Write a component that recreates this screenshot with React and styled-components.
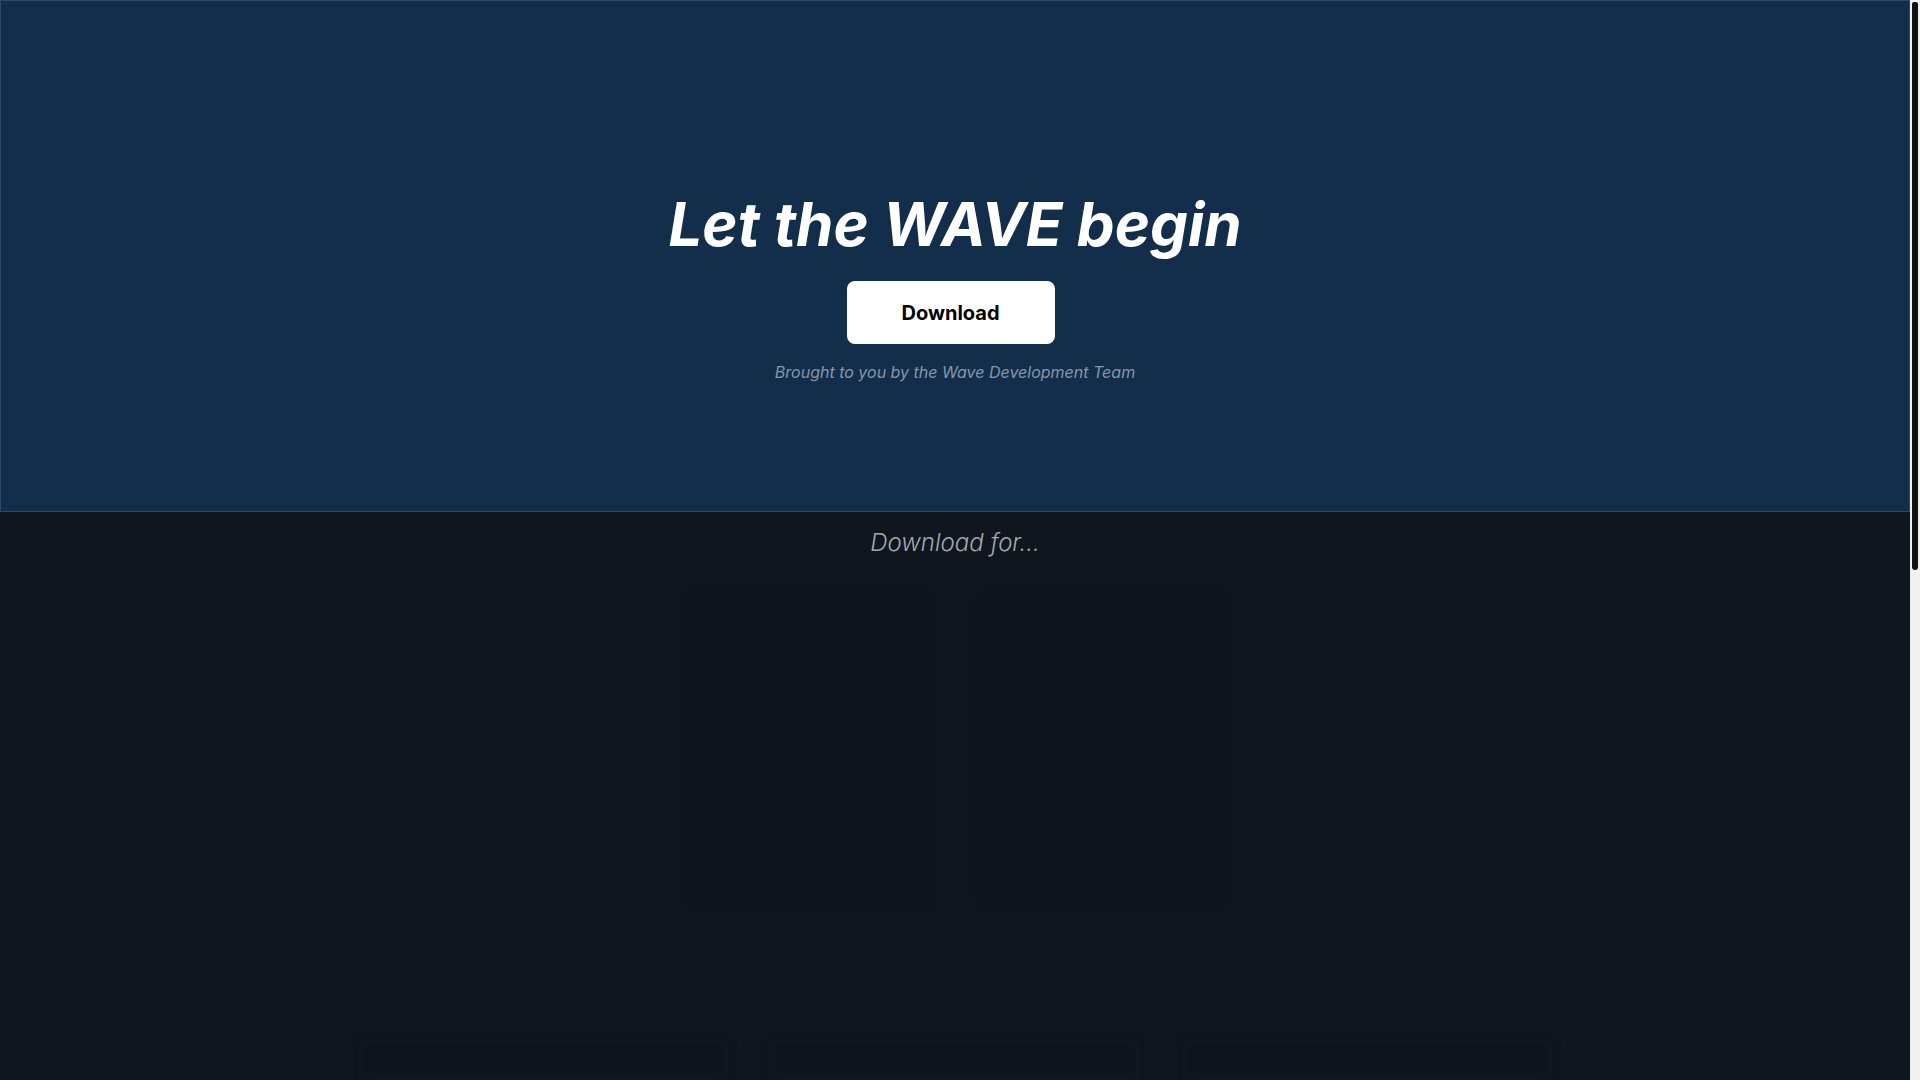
import styled, { createGlobalStyle } from 'styled-components';

const platforms = ['windows', 'linux'];
const extras = ['changelog', 'source', 'community'];

export default function App() {
    return (
        <>
            <GlobalStyle />
            <Page>
                <Hero>
                    <Title>Let the WAVE begin</Title>
                    <DownloadButton>Download</DownloadButton>
                    <Credit>Brought to you by the Wave Development Team</Credit>
                </Hero>

                <Downloads>
                    <SectionTitle>Download for...</SectionTitle>
                    <PlatformGrid>
                        {platforms.map(p => (
                            <PlatformCard key={p} />
                        ))}
                    </PlatformGrid>

                    <InfoGrid>
                        {extras.map(e => (
                            <InfoCard key={e}>
                                <InfoHeader />
                            </InfoCard>
                        ))}
                    </InfoGrid>
                </Downloads>
            </Page>
            <ScrollTrack>
                <ScrollThumb />
            </ScrollTrack>
        </>
    );
}

const GlobalStyle = createGlobalStyle`
    * {
        box-sizing: border-box;
    }

    html, body {
        margin: 0;
        padding: 0;
        background-color: #0F161E;
        font-family: Inter, "Noto Sans", sans-serif;
    }

    ::-webkit-scrollbar {
        display: none;
    }
`;

const Page = styled.div`
    width: calc(100% - 10px);
    min-height: 2046px;
    background-color: #0F161E;
`;

// scrollbar look-alike, the page is taller than the window
const ScrollTrack = styled.div`
    position: fixed;
    top: 0;
    right: 0;
    width: 10px;
    height: 100vh;
    background-color: #F1F1F1;
    padding: 2px 2px 0 2px;
`;

const ScrollThumb = styled.div`
    height: 568px;
    background-color: #121212;
    border-radius: 2px 2px 3px 3px;
`;

const Hero = styled.header`
    height: 512px;
    padding-top: 193px;
    background-color: #122E4A;
    border: 1px solid #2C4A69;
    display: flex;
    flex-direction: column;
    align-items: center;
`;

const Title = styled.h1`
    margin: 0;
    font-size: 60px;
    line-height: 1;
    font-weight: 700;
    font-style: italic;
    color: #FFFFFF;
`;

const DownloadButton = styled.button`
    margin: 27px 9px 0 0;
    height: 63px;
    width: 208px;
    border: none;
    border-radius: 8px;
    background-color: #FFFFFF;
    color: #000000;
    font-family: Inter, "Noto Sans", sans-serif;
    font-size: 20px;
    font-weight: 700;
    cursor: pointer;
`;

const Credit = styled.p`
    margin: 16px 0 0 0;
    font-size: 16px;
    line-height: 24px;
    font-style: italic;
    font-weight: 400;
    color: #8796A8;
`;

const Downloads = styled.section`
    display: flex;
    flex-direction: column;
    align-items: center;
    padding-top: 17px;
    padding-bottom: 120px;
`;

const SectionTitle = styled.h2`
    margin: 0;
    font-size: 24px;
    line-height: 1.2;
    font-weight: 300;
    font-style: italic;
    color: #A3A8AE;
`;

const PlatformGrid = styled.div`
    margin-top: 36px;
    display: flex;
    gap: 45px;
`;

const PlatformCard = styled.div`
    width: 247px;
    height: 310px;
    border-radius: 6px;
    background-color: #0D141B;
    box-shadow: 0 0 10px rgba(0, 0, 0, 0.2);
`;

const InfoGrid = styled.div`
    margin-top: 135px;
    display: flex;
    gap: 40px;
`;

const InfoCard = styled.div`
    width: 372px;
    height: 420px;
    padding: 7px 9px;
    border-radius: 6px;
    background-color: #0F161E;
    box-shadow: 0 0 10px rgba(0, 0, 0, 0.2);
`;

const InfoHeader = styled.div`
    height: 26px;
    border-radius: 4px;
    background-color: #0D141B;
    box-shadow: 0 0 4px rgba(0, 0, 0, 0.2);
`;
